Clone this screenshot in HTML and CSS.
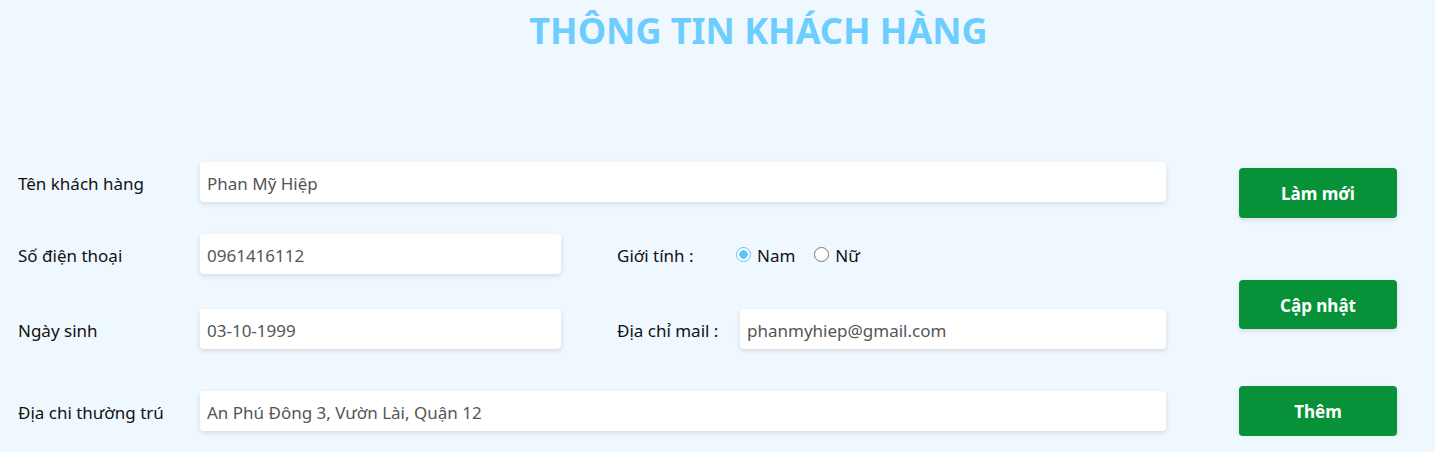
FILE: index.html
```html
<!DOCTYPE html>
<html lang="vi">
<head>
<meta charset="utf-8">
<title>Thông tin khách hàng</title>
<link rel="stylesheet" href="styles.css">
</head>
<body>
<h1 class="title">THÔNG TIN KHÁCH HÀNG</h1>
<div class="content">
  <form class="form">
    <div class="row row-1">
      <label class="label">Tên khách hàng</label>
      <input class="field span-all" type="text" value="Phan Mỹ Hiệp">
    </div>
    <div class="row row-2">
      <label class="label">Số điện thoại</label>
      <input class="field" type="text" value="0961416112">
      <span></span>
      <label class="label">Giới tính :</label>
      <div class="radios">
        <label class="radio"><input type="radio" name="gt" checked> Nam</label>
        <label class="radio"><input type="radio" name="gt"> Nữ</label>
      </div>
    </div>
    <div class="row row-3">
      <label class="label">Ngày sinh</label>
      <input class="field" type="text" value="03-10-1999">
      <span></span>
      <label class="label">Địa chỉ mail :</label>
      <input class="field" type="text" value="phanmyhiep@gmail.com">
    </div>
    <div class="row row-4">
      <label class="label">Địa chi thường trú</label>
      <input class="field span-all" type="text" value="An Phú Đông 3, Vườn Lài, Quận 12">
    </div>
  </form>
  <div class="actions">
    <button class="btn btn-1" type="button">Làm mới</button>
    <button class="btn btn-2" type="button">Cập nhật</button>
    <button class="btn btn-3" type="button">Thêm</button>
  </div>
</div>
</body>
</html>
```
FILE: styles.css
```css
html, body {
  margin: 0;
  padding: 0;
  background: #f0f8ff;
  font-family: "Noto Sans", "Open Sans", sans-serif;
  color: #111;
}
.title {
  margin: 0;
  padding: 8px 0 0 82px;
  text-align: center;
  font-size: 36px;
  line-height: 46px;
  font-weight: 700;
  color: #6ccdfe;
}
.content {
  display: flex;
  padding: 108px 0 0 18px;
}
.form {
  width: 1148px;
}
.row {
  display: grid;
  grid-template-columns: 182px 361px 56px 123px 426px;
  align-items: center;
  height: 40px;
}
.row-2 { margin-top: 32px; }
.row-3 { margin-top: 35px; }
.row-4 { margin-top: 42px; }
.label {
  font-size: 17px;
  white-space: nowrap;
  padding-top: 3px;
}
.field {
  box-sizing: border-box;
  height: 40px;
  border: none;
  border-radius: 4px;
  background: #fff;
  padding: 3px 7px 0;
  font-family: inherit;
  font-size: 17px;
  color: #555;
  box-shadow: 0 2px 5px rgba(0, 0, 0, 0.12);
  outline: none;
}
.span-all {
  grid-column: 2 / 6;
}
.radios {
  display: flex;
  gap: 19px;
  font-size: 17px;
  padding-top: 2px;
  margin-left: -4px;
}
.radio {
  display: flex;
  align-items: center;
  gap: 6px;
}
.radio input {
  appearance: none;
  -webkit-appearance: none;
  box-sizing: border-box;
  margin: 0 0 2px;
  width: 15px;
  height: 15px;
  border: 1px solid #777;
  border-radius: 50%;
  background: #fff;
}
.radio input:checked {
  border-color: #5ec3f7;
  background: radial-gradient(circle, #5ec3f7 0 4px, #fff 4.5px);
}
.actions {
  display: flex;
  flex-direction: column;
  margin-left: 73px;
  padding-top: 6px;
}
.btn {
  width: 158px;
  height: 50px;
  border: none;
  border-radius: 4px;
  background: #07923a;
  color: #fff;
  font-family: inherit;
  font-size: 17px;
  font-weight: 700;
  padding-top: 2px;
  box-shadow: 0 2px 5px rgba(0, 0, 0, 0.12);
}
.btn-2 { margin-top: 62px; height: 49px; }
.btn-3 { margin-top: 57px; }
```
